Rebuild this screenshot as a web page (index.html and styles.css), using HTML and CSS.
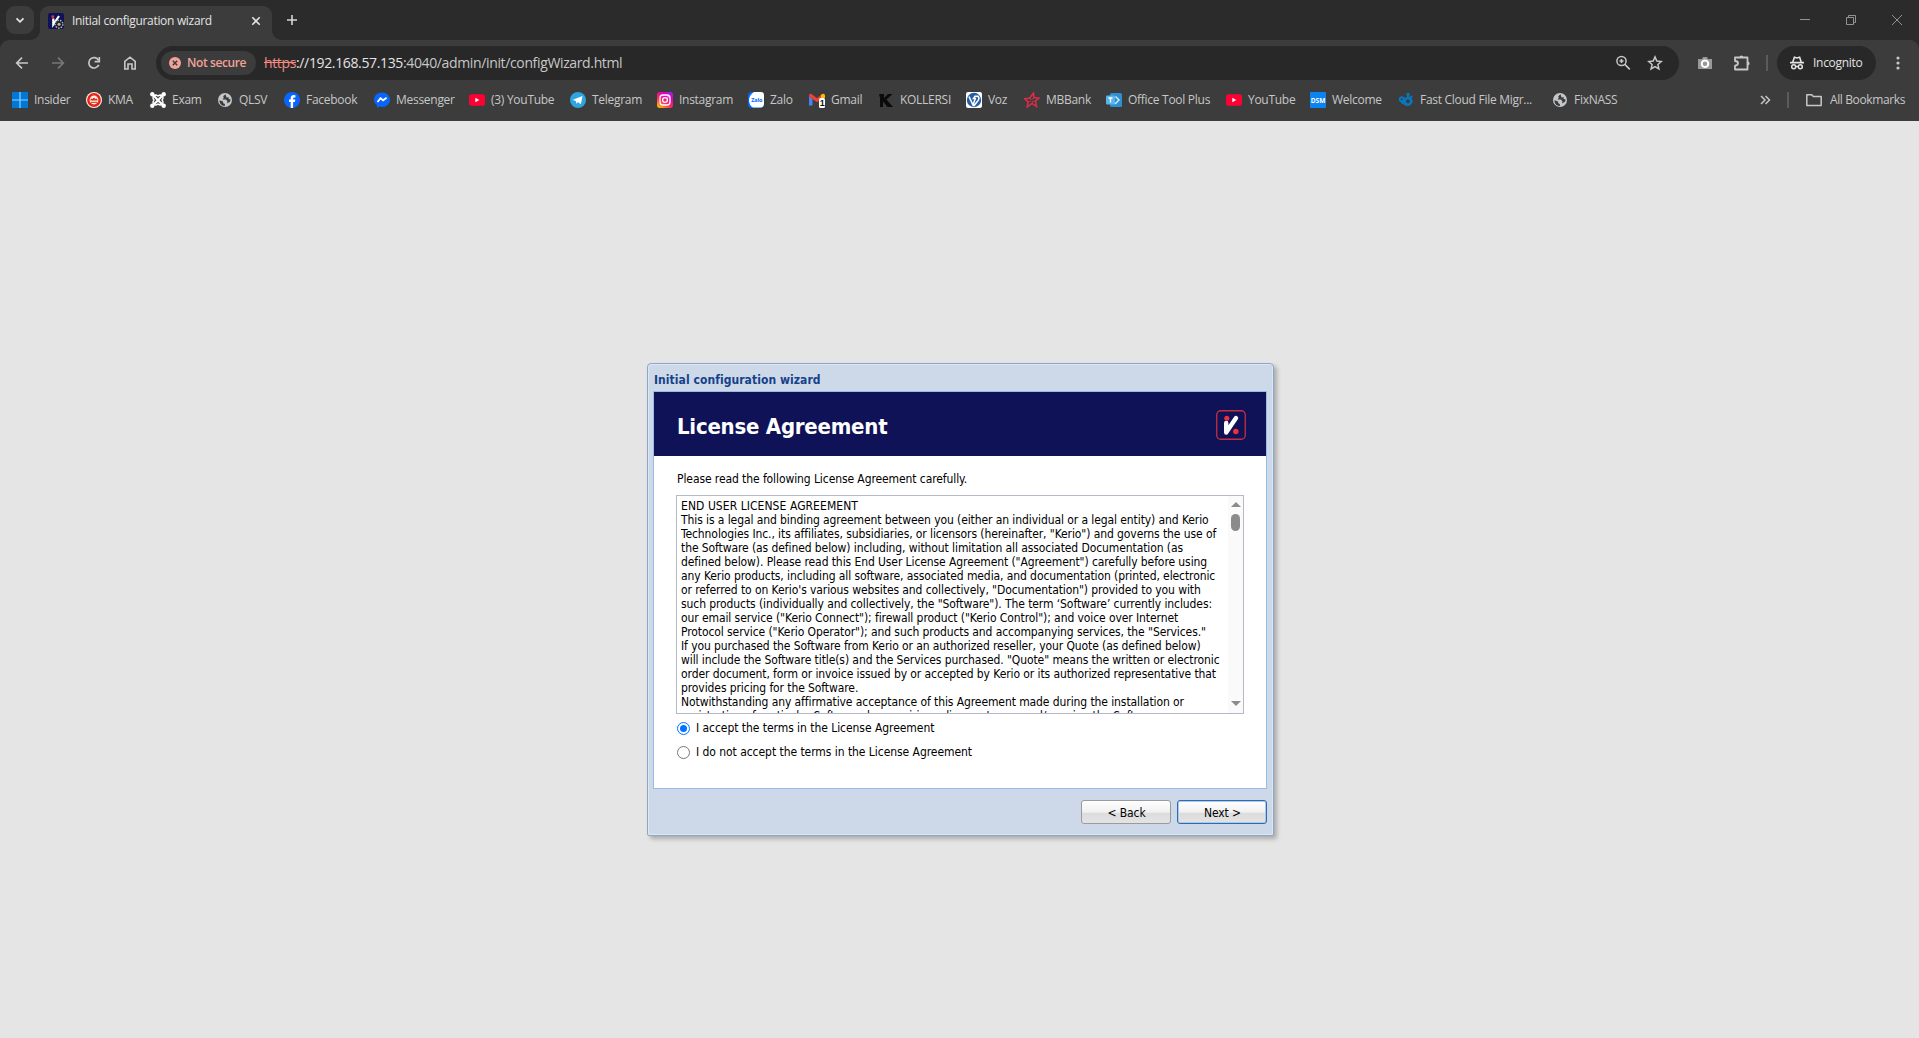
FILE: index.html
```html
<!DOCTYPE html>
<html lang="en">
<head>
<meta charset="utf-8">
<title>Initial configuration wizard</title>
<link rel="stylesheet" href="styles.css">
</head>
<body>
<svg class="defs" width="0" height="0" aria-hidden="true">
  <symbol id="globe" viewBox="0 0 16 16"><circle cx="8" cy="8" r="7" fill="#c4c7c9"/><path d="M2.500 8.300 6 9.600l.3 1.600 1.600.9V14c-3.200.2-5.600-2.400-5.400-5.700zM8.500 2.200 6.200 4.200 6.800 5.800 5.500 7.500 9 7.600 10.500 9.500 10 11.500 13 9.700 13.700 7.500 11.600 7 11.800 5.200 9.600 5.500z" fill="#3c3c3c"/></symbol>
  <symbol id="yt" viewBox="0 0 16 16"><rect y="2.300" width="16" height="11.400" rx="2.500" fill="#ff0033"/><path d="M6.300 5.800v4.400L10.300 8z" fill="#fff"/></symbol>
  <symbol id="mark" viewBox="0 0 30 30"><path d="M10.200 13v9.500M10.500 22 20 8" stroke="#fff" stroke-width="4.400" stroke-linecap="round" fill="none"/><circle cx="10.800" cy="8.300" r="2.500" fill="#ee3338"/><circle cx="19.800" cy="21.500" r="2.700" fill="#ee3338"/></symbol>
</svg>

<header class="browser">
  <div class="tabstrip">
    <div class="tab-search"><svg width="16" height="16" viewBox="0 0 16 16"><path d="m4.500 6.300 3.500 3.500 3.500-3.500" stroke="#e3e3e3" stroke-width="1.800" fill="none"/></svg></div>
    <div class="tab">
      <svg width="16" height="16" viewBox="0 0 16 16"><rect width="16" height="16" rx="2" fill="#101257"/><path d="M5.300 5.500v6L11 3" stroke="#fff" stroke-width="2.200" fill="none"/><circle cx="4.800" cy="3.700" r="1.400" fill="#ee3338"/><circle cx="11" cy="11.200" r="3.900" fill="#222" stroke="#bbb" stroke-width="1.400" stroke-dasharray="1.500 1.200"/><circle cx="11" cy="11.200" r="1.500" fill="#bbb"/></svg>
      <span class="tab-title">Initial configuration wizard</span>
      <svg class="tab-close" width="16" height="16" viewBox="0 0 16 16"><path d="m4.300 4.300 7.400 7.400m0-7.400-7.400 7.400" stroke="#e3e3e3" stroke-width="1.600"/></svg>
    </div>
    <svg class="new-tab" width="16" height="16" viewBox="0 0 16 16"><path d="M8 3v10M3 8h10" stroke="#d5d5d5" stroke-width="1.600"/></svg>
    <div class="window-controls">
      <svg width="12" height="12" viewBox="0 0 12 12"><path d="M1 5.500h10" stroke="#929292"/></svg>
      <svg width="12" height="12" viewBox="0 0 12 12"><path d="M1.500 3.500h7v7h-7zM3.500 3.500v-2h7v7h-2" stroke="#929292" fill="none"/></svg>
      <svg width="12" height="12" viewBox="0 0 12 12"><path d="m1 1 10 10M11 1 1 11" stroke="#929292"/></svg>
    </div>
  </div>

  <div class="toolbar">
    <nav class="nav">
      <svg width="16" height="16" viewBox="0 0 16 16"><path d="M14 8H3M8 2.700 2.700 8 8 13.300" stroke="#c7c7c7" stroke-width="1.700" fill="none"/></svg>
      <svg width="16" height="16" viewBox="0 0 16 16"><path d="M2 8h11M8 2.700 13.300 8 8 13.300" stroke="#777" stroke-width="1.700" fill="none"/></svg>
      <svg width="16" height="16" viewBox="0 0 16 16"><path d="M12.800 9.800A5.200 5.200 0 1 1 12.600 5.300" stroke="#c7c7c7" stroke-width="1.700" fill="none"/><path d="M13.300 2v4.700H8.600" stroke="#c7c7c7" stroke-width="1.700" fill="none"/></svg>
      <svg width="16" height="16" viewBox="0 0 16 16"><path d="M2.800 14V6.300L8 2.200l5.200 4.100V14H10V9H6v5z" stroke="#c7c7c7" stroke-width="1.600" fill="none"/></svg>
    </nav>
    <div class="omnibox">
      <div class="security"><svg width="12" height="12" viewBox="0 0 12 12"><circle cx="6" cy="6" r="6" fill="#f2a29b"/><path d="m3.800 3.800 4.400 4.400m0-4.400L3.800 8.200" stroke="#3c3c3c" stroke-width="1.500"/></svg><span>Not secure</span></div>
      <div class="url"><s>https</s>://192.168.57.135<span class="path">:4040/admin/init/configWizard.html</span></div>
      <svg width="16" height="16" viewBox="0 0 16 16"><circle cx="6.500" cy="6" r="4.600" stroke="#c7c7c7" stroke-width="1.500" fill="none"/><path d="m9.800 9.400 5 5M6.500 4v4M4.500 6h4" stroke="#c7c7c7" stroke-width="1.600"/></svg>
      <svg width="16" height="16" viewBox="0 0 16 16"><path d="m8 1.900 1.800 4.200 4.500.4-3.400 3 1 4.400L8 11.600l-3.900 2.300 1-4.400-3.400-3 4.500-.4z" stroke="#c7c7c7" stroke-width="1.500" fill="none"/></svg>
    </div>
    <div class="extensions">
      <svg width="16" height="16" viewBox="0 0 16 16"><path d="M1 4h4l1-2h4l1 2h4v10H1z" fill="#999"/><circle cx="8" cy="8.800" r="3.300" fill="#999" stroke="#fff" stroke-width="1.900"/></svg>
      <svg width="18" height="18" viewBox="0 0 18 18"><path d="M2 3.500h12.500v12H2v-3.800q3-.2 3-2.400T2 7z" stroke="#c7c7c7" stroke-width="1.800" fill="none" stroke-linejoin="round"/><path d="M6.500 3.300a1.900 1.900 0 0 1 3.800 0M14.700 7.500a1.900 1.900 0 0 1 0 3.800" fill="#c7c7c7"/></svg>
    </div>
    <i class="divider"></i>
    <div class="incognito"><svg width="16" height="16" viewBox="0 0 16 16"><path d="M1 7.600h14M3.800 7 5.400 2.300 8 3l2.600-.7L12.200 7" stroke="#e3e3e3" stroke-width="1.600" fill="none"/><circle cx="4.700" cy="11.800" r="2" stroke="#e3e3e3" stroke-width="1.500" fill="none"/><circle cx="11.300" cy="11.800" r="2" stroke="#e3e3e3" stroke-width="1.500" fill="none"/><path d="M6.500 11.500h3" stroke="#e3e3e3" stroke-width="1.300"/></svg><span>Incognito</span></div>
    <svg class="menu" width="16" height="16" viewBox="0 0 16 16" fill="#c7c7c7"><circle cx="8" cy="3" r="1.600"/><circle cx="8" cy="8" r="1.600"/><circle cx="8" cy="13" r="1.600"/></svg>
  </div>

  <div class="bookmarks">
    <ul class="bookmark-list">
      <li><svg viewBox="0 0 16 16"><path d="M0 0h16v16H0z" fill="#0078d7"/><path d="M8 0v16M0 8h16" stroke="#8cd2ff" stroke-width="1.200"/></svg>Insider</li>
      <li><svg viewBox="0 0 16 16"><circle cx="8" cy="8" r="8" fill="#fff3e2"/><circle cx="8" cy="8" r="6.900" fill="#e4261d"/><circle cx="8" cy="8" r="4.400" fill="#fff3e2"/><path d="M4.300 8.500 5 6.500l1.500.5L8 5.500 9.500 7l1.500-.5.7 2z" fill="#e4261d"/><path d="M4.800 10.300h6.400" stroke="#e4261d"/></svg>KMA</li>
      <li><svg viewBox="0 0 16 16"><g stroke="#fff" stroke-width="2.200" fill="none"><path d="m2.500 2.500 6.500 6.700q3 3 4.500 4.300M13.500 2.500 7 9.200q-3 3-4.500 4.300"/><path d="M3 6.500q0-3.500 3-3.500l2 1 2-1q3 0 3 3.500L12 8l1 2q0 3-3 3l-2-1-2 1q-3 0-3-3l1-2z" stroke-width="1.400"/></g><g fill="#fff"><circle cx="2.300" cy="2.300" r="2.200"/><circle cx="13.700" cy="2.300" r="2.200"/><circle cx="2.300" cy="13.700" r="2.200"/><circle cx="13.700" cy="13.700" r="2.200"/></g></svg>Exam</li>
      <li><svg><use href="#globe"/></svg>QLSV</li>
      <li><svg viewBox="0 0 16 16"><circle cx="8" cy="8" r="8" fill="#0866ff"/><path d="M6.700 16V10H5V7.600h1.700V6.200c0-2.300 1.200-3.200 3-3.200q.9 0 1.700.2v2.200h-1q-1.300 0-1.300 1.200v1h2.200L10.900 10H9.100v6z" fill="#fff"/></svg>Facebook</li>
      <li><svg viewBox="0 0 16 16"><path d="M8 .500c4.600 0 8 3.200 8 7.200s-3.400 7.200-8 7.200q-1.300 0-2.400-.3L3 15.800v-2.500Q0 11 0 7.700C0 3.700 3.400.5 8 .5z" fill="#0866ff"/><path d="m3.500 10 3-3.700 2.600 2 3.500-2.500" stroke="#fff" stroke-width="1.800" fill="none"/></svg>Messenger</li>
      <li><svg><use href="#yt"/></svg>(3) YouTube</li>
      <li><svg viewBox="0 0 16 16"><circle cx="8" cy="8" r="8" fill="#2ca5e0"/><path d="m2.800 7.800 9.700-3.900-1.600 8.400-3-2-1.600 1.500-.3-2.600z" fill="#fff"/></svg>Telegram</li>
      <li><svg viewBox="0 0 16 16"><defs><linearGradient id="ig" x1=".1" y1="1" x2=".8" y2="0"><stop offset="0" stop-color="#ffc800"/><stop offset=".4" stop-color="#ff2b60"/><stop offset=".8" stop-color="#d600c8"/><stop offset="1" stop-color="#9b25ee"/></linearGradient></defs><rect width="16" height="16" rx="3" fill="url(#ig)"/><rect x="3" y="3" width="10" height="10" rx="3" stroke="#fff" stroke-width="1.300" fill="none"/><circle cx="8" cy="8" r="2.400" stroke="#fff" stroke-width="1.300" fill="none"/><circle cx="11" cy="5" r=".7" fill="#fff"/></svg>Instagram</li>
      <li><svg viewBox="0 0 16 16"><rect width="16" height="16" rx="4" fill="#0068ff"/><path d="M6 0h7q3 0 3 3v9q0 3-3 3.500H5Q1.500 14 1 8.500 1 3 6 0z" fill="#fff"/><text x="8.700" y="9.700" text-anchor="middle" class="zalo-logo">Zalo</text></svg>Zalo</li>
      <li><svg viewBox="0 0 16 16"><path d="M0 4v9.500h3.500V7z" fill="#4285f4"/><path d="M0 4q0-3.300 3-1.700l5 3.900 4.500-3.900v4.500L8 10.300 0 4.500z" fill="#ea4335"/><path d="M12 2.700q4-2.200 4 1.300v2h-4z" fill="#fbbc04"/><rect x="10" y="6" width="6" height="10" rx="1.500" fill="#fff"/><text x="13" y="14.300" text-anchor="middle" class="mail-count">1</text></svg>Gmail</li>
      <li><svg viewBox="0 0 16 16"><path d="M1 2h5v4l4-4h4.500L8.500 7.500 15 15H9.500L5 9.500V15H2V6z" fill="#0b0b0b"/></svg>KOLLERSI</li>
      <li><svg viewBox="0 0 16 16"><rect width="16" height="16" rx="2" fill="#fff"/><circle cx="8" cy="8" r="7.200" fill="#285da5"/><path d="m3 4.500 4 8.500 2.300-6.500H7.500L9 4.300h3q2 2.700-.5 5L7.800 14" stroke="#fff" stroke-width="1.500" fill="none"/></svg>Voz</li>
      <li><svg viewBox="0 0 16 16"><path d="m9.500 1 .5 4.500 5 .7-3.500 2.800 1 5.500L8 11.500 3.200 15 4 10 .5 6.700l5-.5z" stroke="#e02b4a" stroke-width="1.500" fill="none"/><path d="m5.500 6.200 2 1.500L10 5.500M11.500 9 9 9.200 8 11.500M4 10l2.500-.5" stroke="#e02b4a" fill="none"/></svg>MBBank</li>
      <li><svg viewBox="0 0 16 16"><rect x="4" y="1" width="12" height="14" rx="1.500" fill="#308fd0"/><rect y="3.500" width="9" height="9" rx="1" fill="#56b5ea"/><path d="M2.500 6h4M4.500 6v4.500" stroke="#fff" stroke-width="1.300" fill="none"/><path d="m9.500 4.500 3.500 3.500-4 4" stroke="#d9effc" stroke-width="1.400" fill="none"/></svg>Office Tool Plus</li>
      <li><svg><use href="#yt"/></svg>YouTube</li>
      <li><svg viewBox="0 0 16 16"><rect width="16" height="16" rx="1" fill="#0b84f3"/><text x="8" y="10.500" text-anchor="middle" class="dsm-logo">DSM</text></svg>Welcome</li>
      <li><svg viewBox="0 0 16 16"><g stroke="#0877bd" fill="none"><circle cx="10" cy="9.300" r="3.300" stroke-width="2.600"/><circle cx="3.800" cy="7.300" r="2" stroke-width="2"/><path d="m10 6 0-4M12 6l2-2M3 10l6 3" stroke-width="2"/></g><circle cx="10" cy="2.500" r="1.700" fill="#0877bd"/></svg>Fast Cloud File Migr...</li>
      <li><svg><use href="#globe"/></svg>FixNASS</li>
    </ul>
    <svg class="more" width="12" height="12" viewBox="0 0 12 12"><path d="m2 2 4 4-4 4M6.500 2l4 4-4 4" stroke="#c7c7c7" stroke-width="1.500" fill="none"/></svg>
    <i class="divider"></i>
    <div class="all-bookmarks"><svg width="16" height="14" viewBox="0 0 16 14"><path d="M.800 12V1.800h5l1.500 1.700h7.900v9H.800z" stroke="#c7c7c7" stroke-width="1.500" fill="none" stroke-linejoin="round"/></svg><span>All Bookmarks</span></div>
  </div>
</header>

<main class="page">
  <section class="wizard">
    <h1 class="wizard-title">Initial configuration wizard</h1>
    <div class="panel">
      <div class="banner">
        <h2>License Agreement</h2>
        <svg width="30" height="30" viewBox="0 0 30 30"><rect x=".750" y=".750" width="28.500" height="28.500" rx="4" stroke="#c62f3e" stroke-width="1.300" fill="none"/><use href="#mark"/></svg>
      </div>
      <div class="content">
        <p class="intro">Please read the following License Agreement carefully.</p>
        <div class="license">
          <div class="license-text"><span class="caps">END USER LICENSE AGREEMENT</span>
This is a legal and binding agreement between you (either an individual or a legal entity) and Kerio
Technologies Inc., its affiliates, subsidiaries, or licensors (hereinafter, "Kerio") and governs the use of
the Software (as defined below) including, without limitation all associated Documentation (as
defined below). Please read this End User License Agreement ("Agreement") carefully before using
any Kerio products, including all software, associated media, and documentation (printed, electronic
or referred to on Kerio's various websites and collectively, "Documentation") provided to you with
such products (individually and collectively, the "Software"). The term ‘Software’ currently includes:
our email service ("Kerio Connect"); firewall product ("Kerio Control"); and voice over Internet
Protocol service ("Kerio Operator"); and such products and accompanying services, the "Services."
If you purchased the Software from Kerio or an authorized reseller, your Quote (as defined below)
will include the Software title(s) and the Services purchased. "Quote" means the written or electronic
order document, form or invoice issued by or accepted by Kerio or its authorized representative that
provides pricing for the Software.
Notwithstanding any affirmative acceptance of this Agreement made during the installation or
registration of particular Software, by acquiring a license to use and/or using the Software</div>
          <div class="scrollbar"><i class="up"></i><i class="thumb"></i><i class="down"></i></div>
        </div>
        <div class="choice"><i class="radio checked"></i><span>I accept the terms in the License Agreement</span></div>
        <div class="choice"><i class="radio"></i><span>I do not accept the terms in the License Agreement</span></div>
      </div>
    </div>
    <footer class="actions">
      <button class="btn">&lt; Back</button>
      <button class="btn primary">Next &gt;</button>
    </footer>
  </section>
</main>
</body>
</html>
```
FILE: styles.css
```css
* { box-sizing: border-box; }
body { margin: 0; height: 1038px; display: flex; flex-direction: column; overflow: hidden; background: #e5e5e5; }
svg { display: block; flex: none; }
.defs { position: absolute; }

/* Browser frame */
.browser { height: 121px; flex: none; background: #2b2b2b; color: #c7c7c7; font: 12px/16px "Open Sans", "Noto Sans", sans-serif; letter-spacing: -.28px; }
.tabstrip { height: 40px; display: flex; padding-left: 6px; }
.tab-search { width: 28px; height: 28px; margin-top: 6px; border-radius: 9px; background: #3c3c3c; display: grid; place-items: center; }
.tab { position: relative; width: 232px; height: 34px; margin: 6px 0 0 6px; padding: 0 8px 5px; border-radius: 9px 9px 0 0; background: #3c3c3c; display: flex; align-items: center; color: #e3e3e3; }
.tab::before, .tab::after { content: ""; position: absolute; bottom: 0; width: 9px; height: 9px; }
.tab::before { left: -9px; background: radial-gradient(circle at 0 0, #2b2b2b 8.5px, #3c3c3c 9px); }
.tab::after { right: -9px; background: radial-gradient(circle at 100% 0, #2b2b2b 8.5px, #3c3c3c 9px); }
.tab-title { margin-left: 8px; letter-spacing: -.31px; }
.tab-close { margin-left: auto; }
.new-tab { margin: 12px 0 0 12px; }
.window-controls { margin-left: auto; display: flex; gap: 34px; padding: 14px 16px 0 0; }

.toolbar { height: 46px; display: flex; align-items: center; background: #3c3c3c; border-radius: 9px 9px 0 0; padding: 0 13px 0 14px; }
.nav { display: flex; gap: 20px; }
.omnibox { flex: 1; height: 34px; margin-left: 18px; padding: 0 16px 0 5px; border-radius: 17px; background: #282828; display: flex; align-items: center; gap: 16px; }
.security { width: 95px; height: 24px; padding-left: 8px; border-radius: 12px; background: #3c3c3c; display: flex; align-items: center; gap: 6px; color: #f2a29b; font-weight: 600; letter-spacing: -.4px; white-space: nowrap; }
.url { flex: 1; margin-left: -8px; font-size: 14px; line-height: 20px; letter-spacing: -.36px; color: #e3e3e3; }
.url s { color: #f28b82; }
.path { color: #c7c7c7; }
.extensions { display: flex; align-items: center; gap: 20px; margin-left: 18px; }
.divider { width: 2px; height: 16px; background: #5b5b5b; }
.toolbar .divider { margin: 0 9px 0 15px; }
.incognito { width: 99px; height: 34px; border-radius: 17px; padding-left: 12px; background: #282828; color: #e3e3e3; display: flex; align-items: center; gap: 8px; }
.menu { margin-left: 14px; }

.bookmarks { height: 35px; background: #3c3c3c; display: flex; align-items: center; padding: 0 14px 7px 12px; }
.bookmark-list { flex: 1; margin: 0; padding: 0; list-style: none; display: grid; grid-template-columns: 74px 64px 67px 67px 90px 95px 101px 87px 91px 61px 69px 88px 58px 82px 120px 84px 88px 154px 80px; }
.bookmark-list li { display: flex; align-items: center; gap: 6px; white-space: nowrap; }
.bookmark-list svg { width: 16px; height: 16px; }
.bookmarks .divider { margin: 0 17px 0 16px; }
.all-bookmarks { display: flex; align-items: center; gap: 8px; letter-spacing: -.38px; white-space: nowrap; }
.zalo-logo { font: bold 5.5px "Open Sans", sans-serif; letter-spacing: -.2px; fill: #0068ff; }
.mail-count { font: bold 9px "Liberation Sans", sans-serif; fill: #111; }
.dsm-logo { font: bold 6.5px "Open Sans", sans-serif; letter-spacing: 0; fill: #fff; }

/* Wizard dialog */
.page { flex: 1; display: flex; justify-content: center; align-items: flex-start; padding: 242px 0 0 2px; font: 12px/14px "DejaVu Sans Condensed", "DejaVu Sans", sans-serif; letter-spacing: -.09px; color: #000; }
.wizard { width: 627px; height: 473px; padding: 0 6px 0 5px; display: flex; flex-direction: column; border: 1px solid #8fa7c6; border-radius: 4px 4px 2px 2px; background: #cdd9e8; box-shadow: inset 1px 1px #dde7f2, inset -1px -1px #dde7f2, 3px 3px 4px rgba(0,0,0,.25); }
.wizard-title { margin: 0; height: 27px; padding: 9px 0 0 1px; font-size: 12px; line-height: 14px; letter-spacing: .06px; color: #15428b; }
.panel { height: 398px; border: 1px solid #99bbe8; background: #fff; }
.banner { height: 64px; padding: 0 20px 0 23px; background: #101257; display: flex; align-items: center; justify-content: space-between; }
.banner h2 { margin: 5px 0 0; font-size: 22px; line-height: 26px; letter-spacing: -.24px; color: #fff; }
.banner svg { margin-top: 1px; }
.content { padding: 16px 22px 0; }
.intro { margin: 0 0 9px 1px; }
.license { width: 568px; height: 219px; border: 1px solid #b5b8c8; display: flex; overflow: hidden; }
.license-text { flex: 1; height: 217px; padding: 3px 0 0 4px; overflow: hidden; white-space: pre; }
.caps { letter-spacing: .06px; }
.scrollbar { width: 15px; background: #fafafa; display: flex; flex-direction: column; align-items: center; padding: 6px 0 7px; }
.up, .down { border: 5px solid transparent; border-top: 0; border-bottom-color: #8b8b8b; }
.thumb { width: 9px; height: 17px; margin-top: 7px; border-radius: 5px; background: #8b8b8b; }
.down { margin-top: auto; border: 5px solid transparent; border-bottom: 0; border-top-color: #8b8b8b; }
.choice { height: 14px; margin-top: 10px; padding-left: 1px; display: flex; align-items: center; gap: 6px; letter-spacing: -.05px; }
.choice:nth-last-child(2) { margin-top: 7px; }
.radio { width: 13px; height: 13px; border: 1px solid #767676; border-radius: 50%; background: #fff; }
.radio.checked { border: 1px solid #0075ff; background: #0075ff; background-clip: content-box; padding: 2px; }
.actions { display: flex; justify-content: flex-end; gap: 6px; padding-top: 11px; }
.btn { width: 90px; height: 24px; padding: 1px 0 0 1px; border: 1px solid #9b9b9b; border-radius: 3px; background: linear-gradient(#fff, #f0f0f0 52%, #dcdcdc 53%, #e3e3e3); font: inherit; letter-spacing: inherit; color: #000; }
.primary { border-color: #3568ad; box-shadow: inset 0 0 0 1px #a9c9ef; }
```
